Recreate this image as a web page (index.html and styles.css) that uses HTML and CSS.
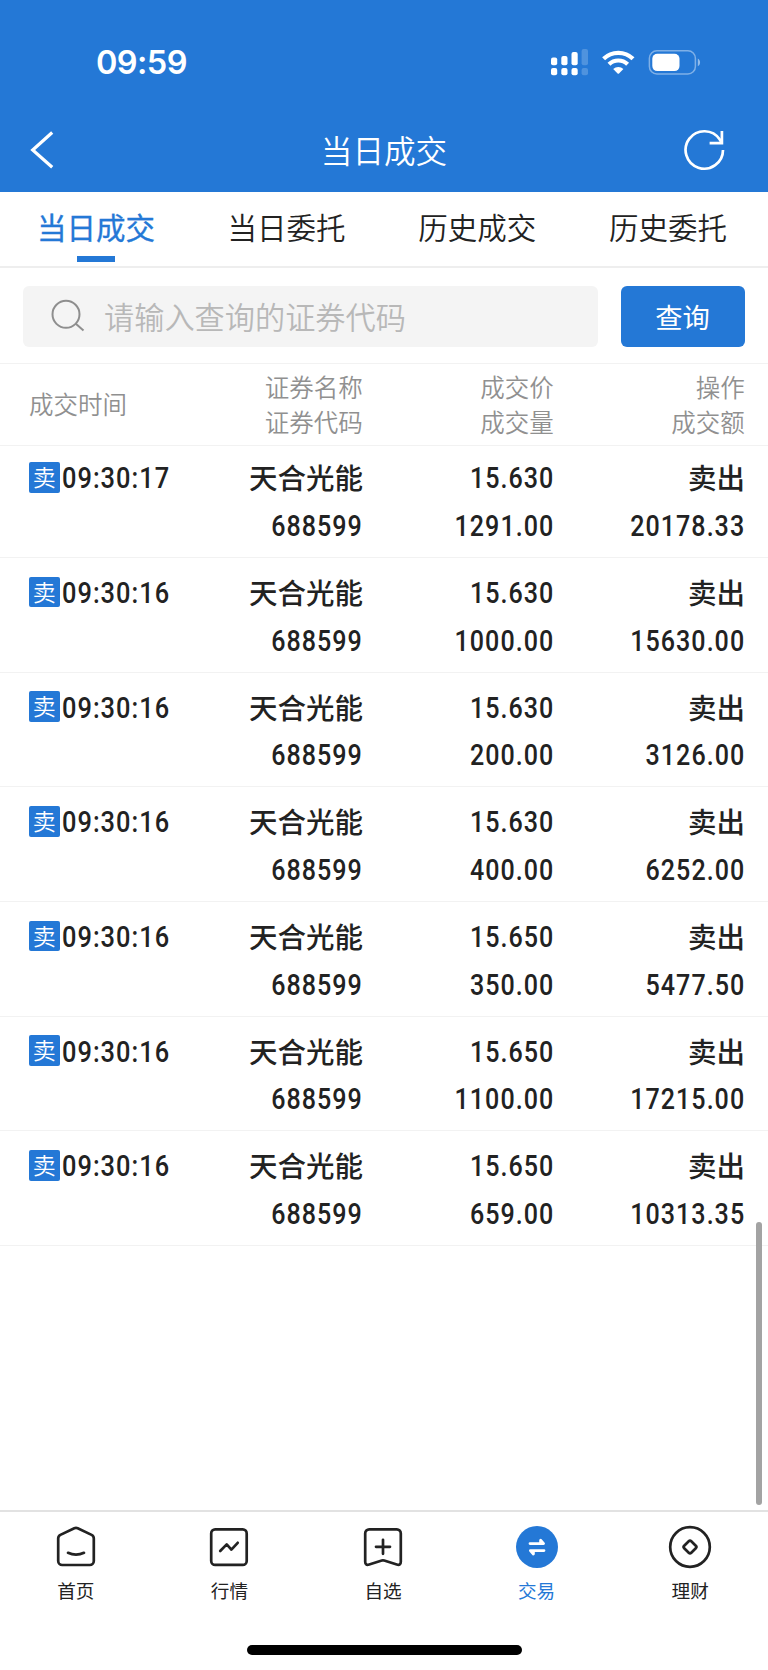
FILE: index.html
```html
<!DOCTYPE html>
<html lang="zh-CN">
<head>
<meta charset="utf-8">
<title>当日成交</title>
<link rel="stylesheet" href="styles.css">
</head>
<body>
<div class="app">
  <header class="top">
    <div class="status">
      <span class="clock">09:59</span>
      <svg class="status-icons" width="150" height="28" viewBox="0 0 150 28" fill="#fff">
        <rect x="0" y="8.5" width="6.2" height="7.8" rx="2"/><rect x="10.3" y="7" width="6.2" height="9.3" rx="2"/><rect x="20.5" y="3" width="6.2" height="13.3" rx="2"/><rect x="30.6" y="0" width="6.4" height="16.3" rx="2" opacity=".2"/>
        <rect x="0" y="19" width="6.2" height="7.2" rx="2"/><rect x="10.3" y="19" width="6.2" height="7.2" rx="2"/><rect x="20.5" y="19" width="6.2" height="7.2" rx="2"/><rect x="30.6" y="19" width="6.4" height="7.2" rx="2" opacity=".2"/>
        <g fill="none" stroke="#fff" stroke-width="4.2"><path d="M52.6 9.8a21 21 0 0 1 29.4 0"/><path d="M58 15.3a13.3 13.3 0 0 1 18.6 0"/></g>
        <path d="M62.2 20.1a7.5 7.5 0 0 1 10.2 0l-4.4 4.4a1 1 0 0 1-1.4 0z"/>
        <rect x="98.4" y="1.8" width="46" height="23.2" rx="7.5" fill="none" stroke="#fff" stroke-width="1.5" opacity=".42"/>
        <rect x="101.3" y="4.7" width="27.2" height="17.4" rx="5"/>
        <path d="M146.8 9.5c3 1.6 3 6.2 0 7.8z" opacity=".5"/>
      </svg>
    </div>
    <div class="titlebar">
      <svg class="back" width="24" height="40" viewBox="0 0 24 40" fill="none" stroke="#fff" stroke-width="3.2"><path d="M22.2 2.5 2.7 20l19.5 17.3"/></svg>
      <h1 class="title">当日成交</h1>
      <svg class="refresh" width="42" height="42" viewBox="0 0 42 42" fill="none" stroke="#fff" stroke-width="2.7"><path d="M39 21A18.7 18.7 0 1 1 35.8 10.5L38 14.3"/><path d="M37.9 2v12.2H25.6"/></svg>
    </div>
  </header>

  <nav class="tabs">
    <a class="tab tab-on">当日成交</a><a class="tab">当日委托</a><a class="tab">历史成交</a><a class="tab">历史委托</a>
  </nav>

  <div class="search">
    <div class="field">
      <svg width="34" height="34" viewBox="0 0 34 34" fill="none" stroke="#8e8e8e" stroke-width="2"><circle cx="15" cy="15.3" r="13.5"/><path d="m24.5 24.5 8 7"/></svg>
      <span class="placeholder">请输入查询的证券代码</span>
    </div>
    <button class="query">查询</button>
  </div>

  <div class="grid head">
    <div class="time">成交时间</div>
    <div class="cell">证券名称<br>证券代码</div>
    <div class="cell">成交价<br>成交量</div>
    <div class="cell">操作<br>成交额</div>
  </div>

  <main class="list">
    <div class="grid row"><div class="time"><i class="badge">卖</i><b class="num left">09:30:17</b></div><div class="cell"><span class="name">天合光能</span><b class="num">688599</b></div><div class="cell"><b class="num">15.630</b><b class="num">1291.00</b></div><div class="cell"><span class="name">卖出</span><b class="num">20178.33</b></div></div>
    <div class="grid row"><div class="time"><i class="badge">卖</i><b class="num left">09:30:16</b></div><div class="cell"><span class="name">天合光能</span><b class="num">688599</b></div><div class="cell"><b class="num">15.630</b><b class="num">1000.00</b></div><div class="cell"><span class="name">卖出</span><b class="num">15630.00</b></div></div>
    <div class="grid row"><div class="time"><i class="badge">卖</i><b class="num left">09:30:16</b></div><div class="cell"><span class="name">天合光能</span><b class="num">688599</b></div><div class="cell"><b class="num">15.630</b><b class="num">200.00</b></div><div class="cell"><span class="name">卖出</span><b class="num">3126.00</b></div></div>
    <div class="grid row"><div class="time"><i class="badge">卖</i><b class="num left">09:30:16</b></div><div class="cell"><span class="name">天合光能</span><b class="num">688599</b></div><div class="cell"><b class="num">15.630</b><b class="num">400.00</b></div><div class="cell"><span class="name">卖出</span><b class="num">6252.00</b></div></div>
    <div class="grid row"><div class="time"><i class="badge">卖</i><b class="num left">09:30:16</b></div><div class="cell"><span class="name">天合光能</span><b class="num">688599</b></div><div class="cell"><b class="num">15.650</b><b class="num">350.00</b></div><div class="cell"><span class="name">卖出</span><b class="num">5477.50</b></div></div>
    <div class="grid row"><div class="time"><i class="badge">卖</i><b class="num left">09:30:16</b></div><div class="cell"><span class="name">天合光能</span><b class="num">688599</b></div><div class="cell"><b class="num">15.650</b><b class="num">1100.00</b></div><div class="cell"><span class="name">卖出</span><b class="num">17215.00</b></div></div>
    <div class="grid row"><div class="time"><i class="badge">卖</i><b class="num left">09:30:16</b></div><div class="cell"><span class="name">天合光能</span><b class="num">688599</b></div><div class="cell"><b class="num">15.650</b><b class="num">659.00</b></div><div class="cell"><span class="name">卖出</span><b class="num">10313.35</b></div></div>
    <div class="scrollbar"></div>
  </main>

  <footer class="bottom">
    <nav class="nav">
      <a class="item">
        <svg width="44" height="44" viewBox="0 0 44 44"><path d="M20.3 3.2a4 4 0 0 1 3.4 0L37.6 9.9a4 4 0 0 1 2.2 3.6V36a4 4 0 0 1-4 4H8.2a4 4 0 0 1-4-4V13.5a4 4 0 0 1 2.2-3.6z"/><path d="M14 27.8q8 3.8 16 0"/></svg>
        <span>首页</span>
      </a>
      <a class="item">
        <svg width="44" height="44" viewBox="0 0 44 44"><rect x="4.2" y="4.4" width="35.5" height="35.5" rx="4"/><path d="m13.2 26 6.5-6.6 4.7 5.2 6.3-6.8"/></svg>
        <span>行情</span>
      </a>
      <a class="item">
        <svg width="44" height="44" viewBox="0 0 44 44"><path d="M8.2 4.4h27.6a4 4 0 0 1 4 4v28.3q0 4.1-4 2.8L23.2 35.5a4 4 0 0 0-2.4 0L8.2 39.5q-4 1.3-4-2.8V8.4a4 4 0 0 1 4-4z"/><path d="M15 21.8h14M22 14.8v14"/></svg>
        <span>自选</span>
      </a>
      <a class="item item-on">
        <svg width="44" height="44" viewBox="0 0 44 44"><circle class="disc" cx="22" cy="22" r="21"/><path class="arrows" d="M15 18.6h13.6l-3-3.4v3M29 25.6H15.4l3 3.4v-3"/></svg>
        <span>交易</span>
      </a>
      <a class="item">
        <svg width="44" height="44" viewBox="0 0 44 44"><circle cx="22" cy="22" r="19.8"/><rect x="17" y="17" width="10" height="10" rx="1.8" transform="rotate(45 22 22)"/></svg>
        <span>理财</span>
      </a>
    </nav>
    <div class="home-bar"></div>
  </footer>
</div>
</body>
</html>
```

FILE: styles.css
```css
* { box-sizing: border-box; }
body { margin: 0; background: #fff; color: #222; font-family: "Noto Sans CJK SC", sans-serif; }
.app { width: 768px; height: 1670px; display: flex; flex-direction: column; overflow: hidden; }

.top { height: 191.6px; flex: none; background: #2478d6; color: #fff; }
.status { height: 109px; padding: 33px 67.5px 0 96px; display: flex; justify-content: space-between; align-items: flex-start; }
.clock { font: 600 32.5px/60px Inter, sans-serif; letter-spacing: -.6px; }
.status-icons { margin-top: 16px; }
.titlebar { display: flex; justify-content: space-between; align-items: center; height: 82px; padding: 0 42px 0 30px; }
.title { margin: 0; font-size: 31.6px; font-weight: 350; line-height: 80px; height: 82px; }
.back { margin-right: 30px; }

.tabs { flex: none; height: 76.4px; display: grid; grid-template-columns: repeat(4, 190.7px); padding-left: .6px; border-bottom: 2px solid #eee; }
.tab { position: relative; text-align: center; font-size: 29.5px; line-height: 69px; font-weight: 350; color: #222; }
.tab-on { color: #2478d6; font-weight: 400; -webkit-text-stroke: .3px #2478d6; }
.tab-on::after { content: ""; position: absolute; left: 76px; bottom: 4px; width: 38px; height: 6px; background: #2478d6; }

.search { flex: none; height: 96px; padding: 17.8px 23px 0; display: flex; gap: 23px; border-bottom: 1.5px solid #f2f2f2; }
.field { flex: 1; height: 61px; border-radius: 6px; background: #f4f4f4; display: flex; align-items: center; padding-left: 28px; gap: 19px; }
.placeholder { font-size: 30.2px; font-weight: 350; line-height: 61px; color: #b8b8b8; }
.query { width: 124px; height: 61px; border: 0; border-radius: 6px; background: #2478d6; color: #fff; font: 400 27.3px/61px "Noto Sans CJK SC", sans-serif; padding: 0 1px 0 0; }

.grid { display: grid; grid-template-columns: 168px 166px 191px 191px; padding-left: 29px; }
.head { flex: none; height: 82px; border-bottom: 1.5px solid #f2f2f2; font-size: 24.5px; line-height: 35px; font-weight: 350; color: #909090; padding-top: 5px; }
.head .time { line-height: 69px; }
.cell { text-align: right; display: flex; flex-direction: column; align-items: flex-end; }
.head .cell { display: block; padding-right: .3px; }

.list { flex: 1; position: relative; }
.row { height: 114.67px; padding-top: 11.9px; border-bottom: 1.5px solid #f2f2f2; font-size: 28.5px; font-weight: 500; line-height: 47.7px; }
.row:first-child { height: 112px; padding-top: 9.2px; }
.row .time { display: flex; align-items: center; height: 47.7px; }
.name { line-height: 43.7px; height: 47.7px; }
.badge { flex: none; width: 30.5px; height: 30.5px; margin: -3.5px 2px 0 0; border-radius: 2px; background: #2478d6; color: #fff; font-size: 23px; font-style: normal; font-weight: 350; line-height: 28px; text-align: center; }
.num { font-family: Roboto, sans-serif; font-size: 29.5px; font-weight: 500; letter-spacing: 1.2px; transform: scaleX(.85); transform-origin: right; }
.left { transform: scaleX(.86); transform-origin: left; }
.scrollbar { position: absolute; right: 6px; top: 776.5px; width: 6px; height: 283px; border-radius: 3px; background: #a3a3a3; }

.bottom { flex: none; height: 160px; border-top: 2px solid #e2e2e2; display: flex; flex-direction: column; align-items: center; }
.nav { width: 768px; height: 133px; display: grid; grid-template-columns: repeat(5, 153.6px); padding-top: 13px; margin-left: -2px; }
.item { display: flex; flex-direction: column; align-items: center; font-size: 18.6px; font-weight: 400; line-height: 26px; gap: 7.5px; }
.item svg { fill: none; stroke: #222; stroke-width: 2.7; stroke-linecap: round; stroke-linejoin: round; }
.item-on { color: #2478d6; }
.item .disc { fill: #2478d6; stroke: none; }
.item .arrows { stroke: #fff; stroke-width: 2.8; }
.home-bar { width: 275px; height: 10px; border-radius: 5px; background: #000; }
```
